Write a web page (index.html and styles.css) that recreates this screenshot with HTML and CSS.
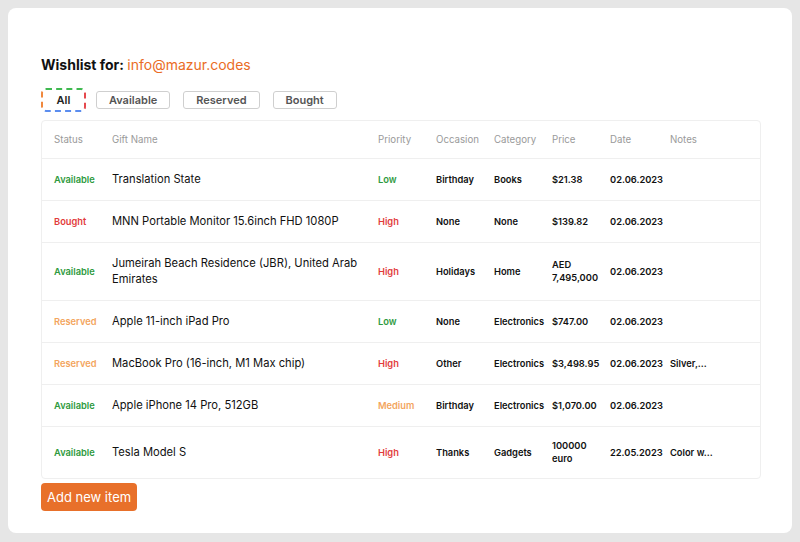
FILE: index.html
```html
<!DOCTYPE html>
<html>
<head>
<meta charset="utf-8">
<link rel="stylesheet" href="styles.css">
</head>
<body>
<div class="panel">
  <h1 class="title">Wishlist for: <span class="email">info@mazur.codes</span></h1>
  <div class="filters">
    <button class="filter filter-active">All</button>
    <button class="filter">Available</button>
    <button class="filter">Reserved</button>
    <button class="filter">Bought</button>
  </div>
  <div class="table-wrap">
    <table class="wishlist">
      <colgroup>
        <col class="c-status"><col class="c-name"><col class="c-prio"><col class="c-occ"><col class="c-cat"><col class="c-price"><col class="c-date"><col class="c-notes">
      </colgroup>
      <thead>
        <tr><th>Status</th><th>Gift Name</th><th>Priority</th><th>Occasion</th><th>Category</th><th>Price</th><th>Date</th><th>Notes</th></tr>
      </thead>
      <tbody>
        <tr class="r42"><td class="st green">Available</td><td class="name">Translation State</td><td class="st green">Low</td><td class="b">Birthday</td><td class="b">Books</td><td class="b">$21.38</td><td class="b">02.06.2023</td><td class="b"></td></tr>
        <tr class="r42"><td class="st red">Bought</td><td class="name">MNN Portable Monitor 15.6inch FHD 1080P</td><td class="st red">High</td><td class="b">None</td><td class="b">None</td><td class="b">$139.82</td><td class="b">02.06.2023</td><td class="b"></td></tr>
        <tr class="r58"><td class="st green">Available</td><td class="name">Jumeirah Beach Residence (JBR), United Arab Emirates</td><td class="st red">High</td><td class="b">Holidays</td><td class="b">Home</td><td class="b">AED 7,495,000</td><td class="b">02.06.2023</td><td class="b"></td></tr>
        <tr class="r42"><td class="st orange">Reserved</td><td class="name">Apple 11-inch iPad Pro</td><td class="st green">Low</td><td class="b">None</td><td class="b">Electronics</td><td class="b">$747.00</td><td class="b">02.06.2023</td><td class="b"></td></tr>
        <tr class="r42"><td class="st orange">Reserved</td><td class="name">MacBook Pro (16-inch, M1 Max chip)</td><td class="st red">High</td><td class="b">Other</td><td class="b">Electronics</td><td class="b">$3,498.95</td><td class="b">02.06.2023</td><td class="b">Silver,...</td></tr>
        <tr class="r42"><td class="st green">Available</td><td class="name">Apple iPhone 14 Pro, 512GB</td><td class="st orange">Medium</td><td class="b">Birthday</td><td class="b">Electronics</td><td class="b">$1,070.00</td><td class="b">02.06.2023</td><td class="b"></td></tr>
        <tr class="r52"><td class="st green">Available</td><td class="name">Tesla Model S</td><td class="st red">High</td><td class="b">Thanks</td><td class="b">Gadgets</td><td class="b">100000 euro</td><td class="b">22.05.2023</td><td class="b">Color w...</td></tr>
      </tbody>
    </table>
  </div>
  <button class="add-btn">Add new item</button>
</div>
</body>
</html>
```

FILE: styles.css
```css
* { box-sizing: border-box; }
html, body { margin: 0; padding: 0; }
body {
  background: #e6e6e6;
  padding: 8px;
  font-family: Inter, "Noto Sans", sans-serif;
  color: #111;
}
.panel {
  background: #fff;
  border-radius: 8px;
  width: 784px;
  height: 525px;
  padding: 47px 31px 0 33px;
}
.title {
  margin: 0;
  font-size: 14px;
  line-height: 20px;
  font-weight: 700;
  color: #111;
}
.email {
  font-weight: 400;
  color: #ea6c25;
}
.filters {
  display: flex;
  align-items: center;
  margin-top: 13px;
  height: 24px;
}
.filter {
  font-family: Inter, "Noto Sans", sans-serif;
  font-size: 11px;
  font-weight: 600;
  color: #555;
  background: #fff;
  border: 1px solid #cfcfcf;
  border-radius: 3px;
  height: 18px;
  padding: 0 12px;
  margin-right: 13px;
  line-height: 16px;
}
.filter-active {
  height: 24px;
  width: 45px;
  padding: 0;
  margin-right: 10px;
  color: #222;
  border: 2px dashed;
  border-color: #3fb950 #e5484d #5b8def #f0883e;
  border-radius: 5px;
}
.table-wrap {
  margin-top: 8px;
  width: 720px;
  border: 1px solid #efefef;
  border-radius: 4px;
}
.wishlist {
  width: 718px;
  table-layout: fixed;
  border-collapse: collapse;
}
.c-status { width: 58px; }
.c-name { width: 266px; }
.c-prio { width: 58px; }
.c-occ { width: 58px; }
.c-cat { width: 58px; }
.c-price { width: 58px; }
.c-date { width: 60px; }
.c-notes { width: 102px; }
.wishlist th {
  height: 37px;
  text-align: left;
  font-weight: 400;
  font-size: 9.7px;
  color: #9a9a9a;
  padding: 0 0 0 12px;
  border-bottom: 1px solid #efefef;
}
.wishlist td {
  padding: 0 0 0 12px;
  font-size: 9.3px;
  line-height: 13px;
  border-bottom: 1px solid #efefef;
}
.wishlist tbody tr:last-child td { border-bottom: none; }
.r42 td { height: 42px; }
.r58 td { height: 58px; }
.r52 td { height: 52px; }
.wishlist td.name {
  font-size: 11.2px;
  line-height: 16px;
  font-weight: 400;
  color: #111;
  padding-right: 8px;
}
.wishlist td.b { font-weight: 600; color: #111; }
.wishlist td.st { font-weight: 600; }
.green { color: #2e9a3e; }
.red { color: #e23b3b; }
.orange { color: #f3a55e; }
.add-btn {
  margin-top: 4px;
  font-family: Inter, "Noto Sans", sans-serif;
  font-size: 13px;
  color: #fff;
  background: #e8702a;
  border: none;
  border-radius: 4px;
  height: 28px;
  padding: 0 6px;
}
```
